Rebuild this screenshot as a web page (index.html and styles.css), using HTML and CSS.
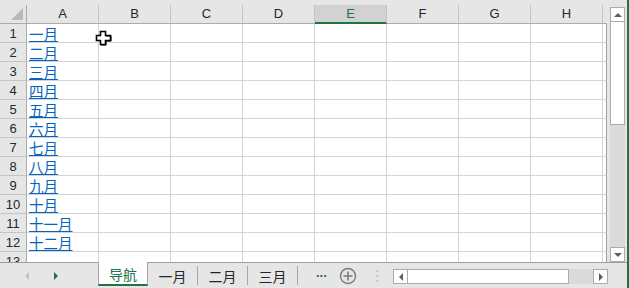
FILE: index.html
```html
<!DOCTYPE html>
<html lang="zh-CN">
<head>
    <meta charset="UTF-8">
    <title>导航</title>
    <link rel="stylesheet" href="styles.css">
</head>
<body>
    <div class="window">
        <div class="main">
            <div class="topstrip"></div>
            <div class="middle">
                <div class="sheet">
                    <div class="grid">
                        <div class="corner"><span class="corner-tri"></span></div>
                        <div class="colhead">A</div>
                        <div class="colhead">B</div>
                        <div class="colhead">C</div>
                        <div class="colhead">D</div>
                        <div class="colhead selected">E</div>
                        <div class="colhead">F</div>
                        <div class="colhead">G</div>
                        <div class="colhead">H</div>
                        <div class="colhead last"></div>
                    </div>
                    <div class="grid rows" id="rows"></div>
                    <svg class="cursor" width="17" height="16" viewBox="0 0 17 16">
                        <path d="M5.5 1.5h5v4h5v5h-5v4h-5v-4h-4v-5h4z" fill="#fff" stroke="#000" stroke-width="1.6"/>
                        <path d="M11 6h5v5h-5v4h-5" fill="none" stroke="#000" stroke-width="1"/>
                    </svg>
                </div>
                <div class="vscroll">
                    <div class="sbtn up"><span class="tri-up"></span></div>
                    <div class="vthumb"></div>
                    <div class="vtrack"></div>
                    <div class="sbtn down"><span class="tri-down"></span></div>
                </div>
            </div>
            <div class="tabbar">
                <div class="tabnav">
                    <span class="nav-left"></span>
                    <span class="nav-right"></span>
                </div>
                <div class="tab active">导航</div>
                <div class="tab">一月</div>
                <div class="tab">二月</div>
                <div class="tab">三月</div>
                <div class="more">...</div>
                <div class="addsheet">
                    <svg width="18" height="18" viewBox="0 0 18 18">
                        <circle cx="9" cy="9" r="7.5" fill="none" stroke="#7a7a7a" stroke-width="1.4"/>
                        <path d="M9 4.5v9M4.5 9h9" stroke="#7a7a7a" stroke-width="1.6"/>
                    </svg>
                </div>
                <div class="splitter"><i></i><i></i><i></i></div>
                <div class="hscroll">
                    <div class="sbtn left"><span class="tri-left"></span></div>
                    <div class="hthumb"></div>
                    <div class="htrack"></div>
                    <div class="sbtn right"><span class="tri-right"></span></div>
                </div>
            </div>
        </div>
        <div class="edge"></div>
    </div>

    <script>
        let months = ["一月", "二月", "三月", "四月", "五月", "六月", "七月", "八月", "九月", "十月", "十一月", "十二月", ""];
        let rows = document.getElementById("rows");
        months.forEach((name, i) => {
            let head = document.createElement("div");
            head.className = "rowhead";
            head.innerText = i + 1;
            rows.appendChild(head);
            for (let c = 0; c < 9; c++) {
                let cell = document.createElement("div");
                cell.className = c === 8 ? "cell last" : "cell";
                if (c === 0 && name) {
                    let link = document.createElement("a");
                    link.className = "link";
                    link.innerText = name;
                    cell.appendChild(link);
                }
                rows.appendChild(cell);
            }
        });
    </script>
</body>
</html>
```

FILE: styles.css
```css
body {
    margin: 0;
    background: #e6e6e6;
    font-family: 'Liberation Sans', Arial, sans-serif;
    overflow: hidden;
}
.window {
    display: flex;
    width: 629px;
    height: 288px;
}
.main {
    width: 627px;
    display: flex;
    flex-direction: column;
}
.edge {
    width: 2px;
    background: #217346;
}
.topstrip {
    height: 5px;
}
.middle {
    display: flex;
    height: 257px;
}
.sheet {
    position: relative;
    width: 607px;
    overflow: hidden;
    background: #fff;
}
.grid {
    display: grid;
    grid-template-columns: 27px repeat(8, 72px) 4px;
    grid-auto-rows: 19px;
}
.corner, .colhead {
    box-sizing: border-box;
    background: #e6e6e6;
    border-bottom: 1px solid #ababab;
}
.corner {
    position: relative;
    border-right: 1px solid #ababab;
}
.corner-tri {
    position: absolute;
    right: 3px;
    bottom: 3px;
    width: 0;
    height: 0;
    border-left: 12px solid transparent;
    border-bottom: 12px solid #b8b8b8;
}
.colhead {
    border-right: 1px solid #c4c4c4;
    text-align: center;
    font-size: 13px;
    line-height: 18px;
    color: #262626;
}
.colhead.selected {
    background: #d2d2d2;
    border-bottom: 2px solid #217346;
    color: #217346;
}
.colhead.last {
    border-right: none;
}
.rowhead {
    box-sizing: border-box;
    background: #e6e6e6;
    border-right: 1px solid #ababab;
    border-bottom: 1px solid #c4c4c4;
    text-align: center;
    font-size: 13px;
    line-height: 19px;
    color: #262626;
}
.cell {
    box-sizing: border-box;
    border-right: 1px solid #d4d4d4;
    border-bottom: 1px solid #d4d4d4;
    padding-left: 2px;
    overflow: hidden;
    white-space: nowrap;
}
.cell.last {
    border-right: 1px solid #a0a0a0;
}
.link {
    font-family: 'Noto Sans CJK SC', sans-serif;
    font-size: 14.5px;
    line-height: 19px;
    color: #0563c1;
    text-decoration: underline;
}
.cursor {
    position: absolute;
    left: 95px;
    top: 25px;
}
.vscroll {
    width: 20px;
    display: flex;
    flex-direction: column;
    padding-left: 3px;
    padding-top: 2px;
    box-sizing: border-box;
}
.sbtn {
    box-sizing: border-box;
    width: 15px;
    height: 15px;
    background: #fff;
    border: 1px solid #ababab;
    display: flex;
    align-items: center;
    justify-content: center;
}
.vthumb {
    box-sizing: border-box;
    width: 15px;
    height: 103px;
    background: #fff;
    border: 1px solid #ababab;
    border-top: none;
}
.vtrack {
    flex: 1;
    width: 15px;
    background: #dadada;
}
.tri-up {
    border-left: 4px solid transparent;
    border-right: 4px solid transparent;
    border-bottom: 4px solid #606060;
}
.tri-down {
    border-left: 4px solid transparent;
    border-right: 4px solid transparent;
    border-top: 4px solid #606060;
}
.tri-left {
    border-top: 4px solid transparent;
    border-bottom: 4px solid transparent;
    border-right: 4px solid #606060;
}
.tri-right {
    border-top: 4px solid transparent;
    border-bottom: 4px solid transparent;
    border-left: 4px solid #606060;
}
.tabbar {
    display: flex;
    height: 26px;
    box-sizing: border-box;
    border-top: 1px solid #9e9e9e;
    align-items: stretch;
}
.tabnav {
    width: 98px;
    position: relative;
}
.nav-left, .nav-right {
    position: absolute;
    top: 9px;
    border-top: 4px solid transparent;
    border-bottom: 4px solid transparent;
}
.nav-left {
    left: 25px;
    border-right: 4px solid #c2c2c2;
}
.nav-right {
    left: 54px;
    border-left: 4px solid #217346;
}
.tab {
    width: 50px;
    box-sizing: border-box;
    font-family: 'Noto Sans CJK SC', sans-serif;
    font-size: 14px;
    line-height: 21px;
    text-align: center;
    color: #262626;
    margin: 3px 0 3px;
    border-right: 1px solid #a6a6a6;
}
.tab.active {
    margin: -1px 0 2px;
    line-height: 23px;
    padding-top: 1px;
    background: #fff;
    color: #217346;
    border-left: 1px solid #a6a6a6;
    border-right: 1px solid #a6a6a6;
    border-bottom: 2px solid #217346;
}
.more {
    width: 40px;
    box-sizing: border-box;
    padding-left: 18px;
    color: #217346;
    font-weight: bold;
    font-size: 13px;
    line-height: 20px;
}
.addsheet {
    width: 18px;
    padding-top: 4px;
    margin-left: 1px;
}
.splitter {
    width: 20px;
    margin-left: 10px;
    display: flex;
    flex-direction: column;
    align-items: center;
    justify-content: center;
    gap: 3px;
}
.splitter i {
    width: 2px;
    height: 2px;
    background: #c8c8c8;
}
.hscroll {
    display: flex;
    margin-left: 6px;
    margin-top: 6px;
    height: 15px;
}
.hthumb {
    box-sizing: border-box;
    width: 161px;
    height: 15px;
    background: #fff;
    border: 1px solid #ababab;
    border-left: none;
}
.htrack {
    width: 24px;
    background: #dadada;
}
```
